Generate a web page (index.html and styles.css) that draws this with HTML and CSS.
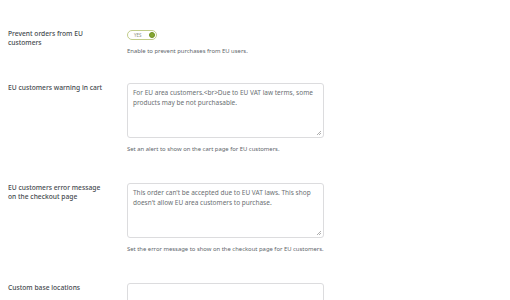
FILE: index.html
```html
<!DOCTYPE html>
<html>
<head>
<meta charset="utf-8">
<link rel="stylesheet" href="styles.css">
</head>
<body>
<div class="form">
  <div class="row row-first">
    <div class="label">Prevent orders from EU customers</div>
    <div class="field">
      <span class="toggle"><span class="yes">YES</span><span class="dot"></span></span>
      <p class="desc desc-toggle">Enable to prevent purchases from EU users.</p>
    </div>
  </div>
  <div class="row">
    <div class="label">EU customers warning in cart</div>
    <div class="field">
      <div class="area">For EU area customers.&lt;br&gt;Due to EU VAT law terms, some products may be not purchasable.<span class="grip"></span></div>
      <p class="desc">Set an alert to show on the cart page for EU customers.</p>
    </div>
  </div>
  <div class="row">
    <div class="label">EU customers error message on the checkout page</div>
    <div class="field">
      <div class="area">This order can't be accepted due to EU VAT laws. This shop doesn't allow EU area customers to purchase.<span class="grip"></span></div>
      <p class="desc">Set the error message to show on the checkout page for EU customers.</p>
    </div>
  </div>
  <div class="row">
    <div class="label">Custom base locations</div>
    <div class="field">
      <div class="box"></div>
    </div>
  </div>
</div>
</body>
</html>
```

FILE: styles.css
```css
html, body {
  margin: 0;
  padding: 0;
  background: #ffffff;
}
body {
  font-family: "Noto Sans", "Open Sans", sans-serif;
  color: #3c434a;
  overflow: hidden;
  height: 300px;
}
.form {
  padding: 14px 0 0 8px;
}
.row {
  display: grid;
  grid-template-columns: 119px 197px;
  padding: 15px 0 15px 0;
  align-items: start;
}
.row-first {
  padding-bottom: 13px;
}
.label {
  font-size: 6.7px;
  font-weight: 500;
  line-height: 9px;
  color: #44494e;
  padding-right: 19px;
}
.field {
  display: flex;
  flex-direction: column;
  align-items: flex-start;
}
.toggle {
  box-sizing: border-box;
  width: 30px;
  height: 10px;
  border: 1px solid #c2cd8a;
  border-radius: 6px;
  display: flex;
  align-items: center;
  justify-content: space-between;
  padding: 0 1px 0 6px;
  margin-top: 1px;
}
.yes {
  font-size: 4.5px;
  color: #8d9180;
  line-height: 1;
}
.dot {
  box-sizing: border-box;
  width: 6px;
  height: 6px;
  border-radius: 50%;
  background: #86a832;
  border: 1px solid #6f8f22;
}
.desc {
  margin: 0;
  font-size: 5.9px;
  line-height: 7px;
  color: #60666b;
  margin-top: 8px;
}
.desc-toggle {
  margin-top: 8px;
}
.area {
  position: relative;
  box-sizing: border-box;
  width: 197px;
  height: 55px;
  border: 1px solid #dcdcde;
  border-radius: 3px;
  padding: 4px 5px;
  font-size: 6.5px;
  line-height: 10px;
  color: #6b6f73;
}
.grip {
  position: absolute;
  right: 2px;
  bottom: 2px;
  width: 4px;
  height: 4px;
  background: linear-gradient(135deg, transparent 45%, #b0b0b0 46%, #b0b0b0 55%, transparent 56%, transparent 70%, #b0b0b0 71%, #b0b0b0 80%, transparent 81%);
}
.box {
  box-sizing: border-box;
  width: 197px;
  height: 40px;
  border: 1px solid #dcdcde;
  border-radius: 3px;
}
```
